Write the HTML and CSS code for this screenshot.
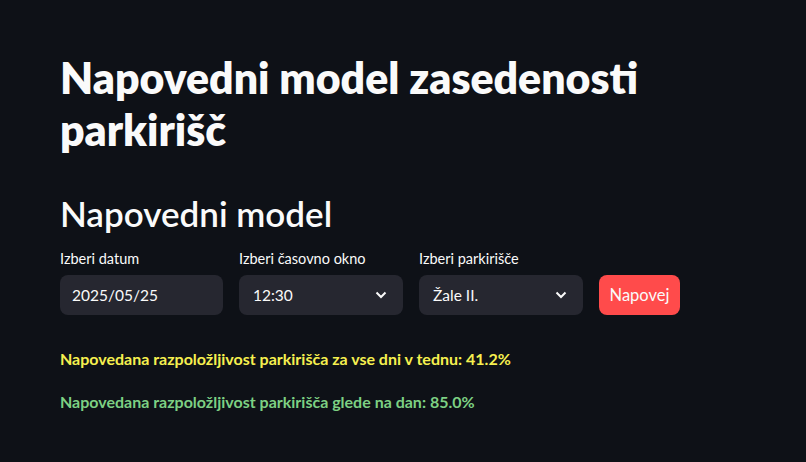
FILE: index.html
```html
<!DOCTYPE html>
<html lang="sl">
<head>
<meta charset="utf-8">
<link rel="stylesheet" href="styles.css">
</head>
<body>
<main class="main">
  <h1 class="title">Napovedni model zasedenosti parkirišč</h1>
  <h2 class="subtitle">Napovedni model</h2>
  <div class="controls">
    <div class="field">
      <label class="label">Izberi datum</label>
      <div class="input">2025/05/25</div>
    </div>
    <div class="field">
      <label class="label">Izberi časovno okno</label>
      <div class="input select">12:30
        <svg class="chev" width="12" height="8" viewBox="0 0 12 8"><path d="M1.5 1.5 L6 6 L10.5 1.5" fill="none" stroke="#fafafa" stroke-width="2"/></svg>
      </div>
    </div>
    <div class="field">
      <label class="label">Izberi parkirišče</label>
      <div class="input select">Žale II.
        <svg class="chev" width="12" height="8" viewBox="0 0 12 8"><path d="M1.5 1.5 L6 6 L10.5 1.5" fill="none" stroke="#fafafa" stroke-width="2"/></svg>
      </div>
    </div>
    <div class="field btn-field">
      <button class="btn">Napovej</button>
    </div>
  </div>
  <p class="result yellow">Napovedana razpoložljivost parkirišča za vse dni v tednu: 41.2%</p>
  <p class="result green">Napovedana razpoložljivost parkirišča glede na dan: 85.0%</p>
</main>
</body>
</html>
```
FILE: styles.css
```css
html, body {
  margin: 0;
  padding: 0;
  background: #0e1117;
  color: #fafafa;
  font-family: Lato, "Noto Sans", sans-serif;
}
.main {
  padding: 52px 60px 0 60px;
}
.title {
  margin: 0;
  font-size: 42.8px;
  line-height: 52px;
  font-weight: 800;
  width: 620px;
}
.subtitle {
  margin: 35px 0 3px 0;
  font-size: 35px;
  line-height: 44px;
  font-weight: 600;
}
.controls {
  margin-top: 14px;
  display: grid;
  grid-template-columns: 163px 164px 164px auto;
  column-gap: 16px;
  align-items: end;
}
.field {
  display: flex;
  flex-direction: column;
}
.label {
  font-size: 14.5px;
  line-height: 20px;
  margin-bottom: 6px;
}
.input {
  height: 40px;
  box-sizing: border-box;
  background: #262730;
  border-radius: 8px;
  padding: 0 12px;
  display: flex;
  align-items: center;
  font-size: 15.5px;
}
.select {
  justify-content: space-between;
  padding-left: 14px;
  padding-right: 16px;
}
.chev { display: block; }
.btn {
  width: 81px;
  height: 40px;
  background: #ff4b4b;
  border: none;
  border-radius: 8px;
  color: #fafafa;
  font-family: inherit;
  font-size: 16.5px;
  padding: 0;
}
.result {
  margin: 0;
  font-size: 16px;
  font-weight: 700;
  line-height: 24px;
}
.yellow { color: #f6f04f; margin-top: 32px; }
.green { color: #7dd083; margin-top: 19px; }
```
